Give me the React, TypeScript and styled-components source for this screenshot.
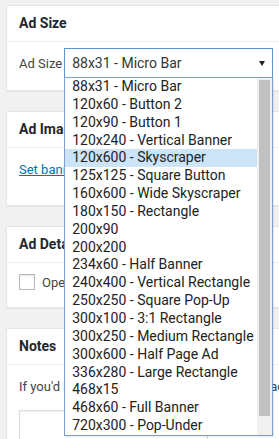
import React from "react"
import styled, { createGlobalStyle } from "styled-components"

const GlobalStyle = createGlobalStyle`
  html, body {
    margin: 0;
    padding: 0;
    background: #f1f1f1;
    overflow: hidden;
  }
  body {
    font-family: Roboto, "Liberation Sans", sans-serif;
    color: #444;
  }
`

const sizes = [
  "88x31 - Micro Bar",
  "120x60 - Button 2",
  "120x90 - Button 1",
  "120x240 - Vertical Banner",
  "120x600 - Skyscraper",
  "125x125 - Square Button",
  "160x600 - Wide Skyscraper",
  "180x150 - Rectangle",
  "200x90",
  "200x200",
  "234x60 - Half Banner",
  "240x400 - Vertical Rectangle",
  "250x250 - Square Pop-Up",
  "300x100 - 3:1 Rectangle",
  "300x250 - Medium Rectangle",
  "300x600 - Half Page Ad",
  "336x280 - Large Rectangle",
  "468x15",
  "468x60 - Full Banner",
  "720x300 - Pop-Under",
  "728x90 - Leaderboard",
]

const Page = styled.div`
  width: 279px;
  height: 439px;
  padding: 5px 0 0 6px;
  box-sizing: border-box;
  overflow: hidden;
  display: flex;
  flex-direction: column;
  gap: 20px;
`

const Postbox = styled.div<{ $top?: number }>`
  position: relative;
  z-index: ${(p) => p.$top ?? 0};
  width: 420px;
  flex: none;
  background: #fff;
  border: 1px solid #e5e5e5;
  box-shadow: 0 1px 1px rgba(0, 0, 0, 0.04);
`

const Header = styled.h2`
  margin: 0;
  height: 35px;
  line-height: 35px;
  padding: 0 12px;
  border-bottom: 1px solid #eee;
  font-size: 14px;
  font-weight: 700;
  color: #23282d;
`

const Body = styled.div<{ $h: number; $pt: number }>`
  height: ${(p) => p.$h}px;
  padding: ${(p) => p.$pt}px 12px 0;
  box-sizing: border-box;
`

const Row = styled.div`
  display: flex;
  align-items: center;
  gap: 2px;
`

const Label = styled.span`
  font-size: 13px;
  color: #444;
`

const SelectWrap = styled.div`
  position: relative;
  width: 209px;
`

const SelectBox = styled.div`
  height: 30px;
  box-sizing: border-box;
  border: 1px solid #5b93d6;
  background: #fff;
  padding: 0 7px;
  display: flex;
  align-items: center;
  justify-content: space-between;
  font-size: 14px;
  color: #32373c;
`

const Caret = styled.span`
  width: 0;
  height: 0;
  border-left: 3px solid transparent;
  border-right: 3px solid transparent;
  border-top: 5px solid #222;
`

const Dropdown = styled.div`
  position: absolute;
  top: 29px;
  left: 0;
  width: 209px;
  height: 359px;
  box-sizing: border-box;
  display: flex;
  background: #fff;
  border: 1px solid #7f9fd3;
  box-shadow: 1px 1px 1px rgba(0, 0, 0, 0.08);
`

const OptionList = styled.ul`
  flex: 1;
  min-width: 0;
  margin: 0;
  padding: 0;
  list-style: none;
  overflow: hidden;
`

const Option = styled.li<{ $active?: boolean }>`
  height: 17.85px;
  line-height: 17.85px;
  padding-left: 7px;
  font-size: 14px;
  color: #222;
  white-space: nowrap;
  background: ${(p) => (p.$active ? "#cce4f7" : "transparent")};
`

const ScrollTrack = styled.div`
  width: 15px;
  flex: none;
  box-sizing: border-box;
  padding: 2px 2px 0 2px;
  background: #f1f1f1;
`

const ScrollThumb = styled.div`
  height: 336px;
  background: #c1c1c1;
`

const Link = styled.a`
  display: block;
  font-size: 13px;
  line-height: 20px;
  color: #0073aa;
  text-decoration: underline;
`

const CheckRow = styled.label`
  display: flex;
  align-items: center;
  gap: 7px;
  font-size: 13px;
  color: #444;
`

const Checkbox = styled.span`
  width: 16px;
  height: 16px;
  box-sizing: border-box;
  border: 1px solid #b4b9be;
  background: #fff;
  box-shadow: inset 0 1px 2px rgba(0, 0, 0, 0.1);
`

const Note = styled.p`
  margin: 0 0 13px;
  font-size: 13px;
  line-height: 20px;
  color: #444;
  white-space: nowrap;
`

const NoteArea = styled.div`
  width: 189px;
  height: 80px;
  box-sizing: border-box;
  border: 1px solid #ddd;
  box-shadow: inset 0 1px 2px rgba(0, 0, 0, 0.07);
`

export default function App() {
  return (
    <>
      <GlobalStyle />
      <Page>
        <Postbox $top={2}>
          <Header>Ad Size</Header>
          <Body $h={48} $pt={6}>
            <Row>
              <Label>Ad Size</Label>
              <SelectWrap>
                <SelectBox>
                  <span>{sizes[0]}</span>
                  <Caret />
                </SelectBox>
                <Dropdown>
                  <OptionList>
                    {sizes.map((s, i) => (
                      <Option key={s} $active={i === 4}>
                        {s}
                      </Option>
                    ))}
                  </OptionList>
                  <ScrollTrack>
                    <ScrollThumb />
                  </ScrollTrack>
                </Dropdown>
              </SelectWrap>
            </Row>
          </Body>
        </Postbox>

        <Postbox>
          <Header>Ad Image</Header>
          <Body $h={57} $pt={12}>
            <Link href="#">Set banner image</Link>
          </Body>
        </Postbox>

        <Postbox>
          <Header>Ad Details</Header>
          <Body $h={44} $pt={11}>
            <CheckRow>
              <Checkbox />
              Open link in a new window
            </CheckRow>
          </Body>
        </Postbox>

        <Postbox>
          <Header>Notes</Header>
          <Body $h={120} $pt={12}>
            <Note>If you'd like to keep any private note about each ad, add it here.</Note>
            <NoteArea />
          </Body>
        </Postbox>
      </Page>
    </>
  )
}
